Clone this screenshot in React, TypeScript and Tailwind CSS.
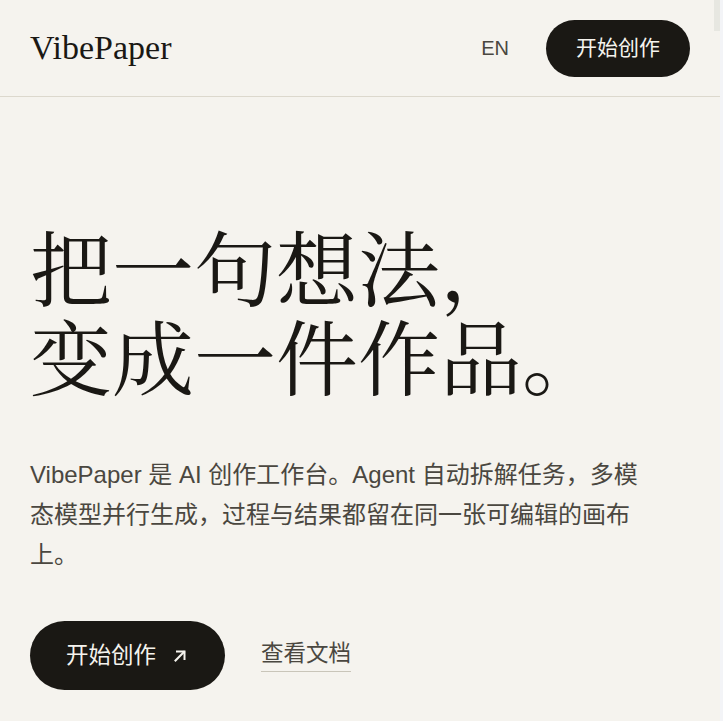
const serif = "font-['Liberation_Serif','Noto_Serif_CJK_SC','Noto_Sans_CJK_SC',serif]";
const cjkSerif = "font-['Noto_Serif_CJK_SC','Source_Han_Serif_SC','Noto_Serif_CJK_JP','Noto_Sans_CJK_SC',serif]";
const sans = "font-['Liberation_Sans','Noto_Sans_CJK_SC',sans-serif]";

function ArrowIcon() {
  return (
    <svg width="14" height="14" viewBox="0 0 14 14" fill="none" stroke="currentColor" strokeWidth="2" strokeLinecap="square">
      <path d="M2.5 11.5 L11 3" />
      <path d="M4 2.5 H11.5 V10" />
    </svg>
  );
}

export default function App() {
  return (
    <div className={`min-h-screen bg-[#f5f3ee] text-[#1a1814] ${sans}`}>
      {/* fake scrollbar */}
      <div className="fixed right-0 top-0 h-full w-[3px] bg-[#f3f4f7]" />
      <div className="fixed right-[3px] top-0 h-[31px] w-[6px] bg-[#e7e7e1]" />

      <header className="mr-[3px] flex h-[97px] items-center justify-between border-b border-[#dcd8cd] px-[30px]">
        <a className={`${serif} text-[34px] leading-none text-[#1a1814]`}>VibePaper</a>
        <nav className="flex items-center gap-[37px]">
          <span className="text-[20px] leading-none text-[#4a4740]">EN</span>
          <button className="flex h-[57px] items-center rounded-full bg-[#1a1814] px-[30px] text-[21px] text-[#f5f3ee]">
            开始创作
          </button>
        </nav>
      </header>

      <main className="px-[30px] pt-[123px]">
        <h1 className={`${cjkSerif} text-[82px] font-normal leading-[89px] text-[#1a1814]`}>
          把一句想法，
          <br />
          变成一件作品。
        </h1>

        <p className="mt-[57px] max-w-[630px] text-[24px] leading-[40px] text-[#4a4740]">
          VibePaper 是 AI 创作工作台。Agent 自动拆解任务，多模态模型并行生成，过程与结果都留在同一张可编辑的画布上。
        </p>

        <div className="mt-[46px] flex items-center gap-[36px]">
          <button className="flex h-[69px] items-center gap-[17px] rounded-full bg-[#1a1814] pl-[36px] pr-[38px] text-[22.5px] text-[#f5f3ee]">
            开始创作
            <ArrowIcon />
          </button>
          <a className="border-b border-[#c9c5b9] pb-[2px] text-[22.5px] leading-[30px] text-[#4a4740]">查看文档</a>
        </div>
      </main>
    </div>
  );
}
